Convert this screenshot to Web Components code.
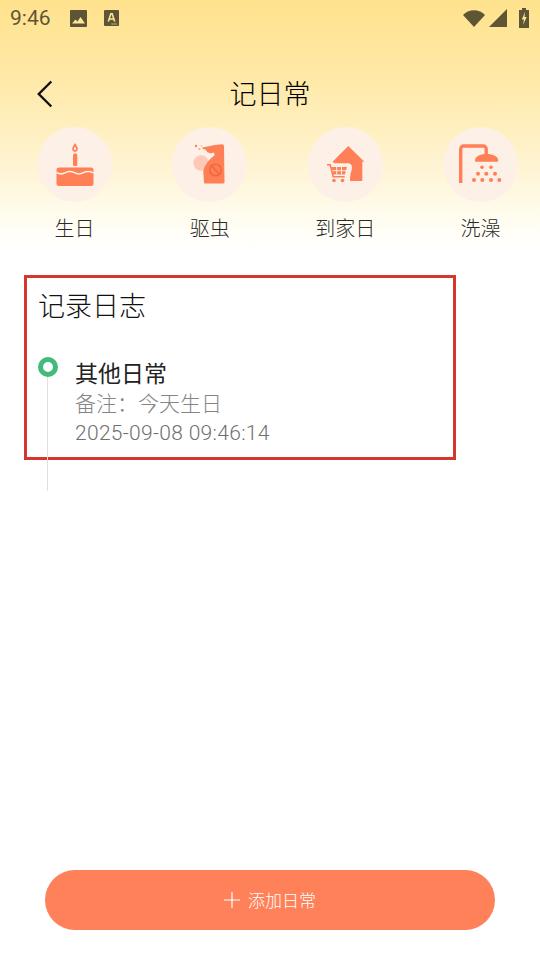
<!DOCTYPE html>
<html lang="zh">
<head>
<meta charset="utf-8">
<title>记日常</title>
<style>
  html, body {
    margin: 0;
    padding: 0;
    background: #fff;
    font-family: Roboto, "Noto Sans CJK SC", sans-serif;
  }
</style>
</head>
<body>
<diary-page>
  <status-bar slot="top" time="9:46"></status-bar>
  <nav-bar slot="top" title="记日常"></nav-bar>
  <quick-row slot="top">
    <quick-item label="生日" icon="cake"></quick-item>
    <quick-item label="驱虫" icon="spray"></quick-item>
    <quick-item label="到家日" icon="home"></quick-item>
    <quick-item label="洗澡" icon="shower"></quick-item>
  </quick-row>
  <log-section heading="记录日志">
    <log-entry title="其他日常" note="备注：今天生日" time="2025-09-08 09:46:14"></log-entry>
  </log-section>
  <add-button slot="bottom" label="添加日常"></add-button>
</diary-page>

<script>
// All icons share a 75x75 box, the same size as the circle behind them
const ICONS = {
  cake: `
    <path d="M38 16c1.200 2.400 2.800 3.700 2.800 5.900 0 1.700-1.200 2.900-2.800 2.900s-2.800-1.200-2.800-2.900c0-2.200 1.600-3.500 2.800-5.900z" fill="#ff7f57"/>
    <path d="M38 19.500c.6 1 1.100 1.600 1.100 2.600 0 .7-.5 1.200-1.100 1.200s-1.100-.5-1.100-1.200c0-1 .5-1.600 1.100-2.600z" fill="#fff0e4"/>
    <rect x="36" y="26.500" width="4.300" height="12.500" rx="1.500" fill="#ff7f57"/>
    <rect x="19.500" y="40.500" width="37" height="18.500" rx="2.500" fill="#ff7f57"/>
    <path d="M19.500 45.500c3 1.800 6 1.800 9 .2s6-1.600 9 0 6 1.600 9 0 6.500-1.400 10 .2" fill="none" stroke="#fff3e8" stroke-width="1.500"/>`,
  spray: `
    <circle cx="29" cy="36" r="7.700" fill="#ffc9b8"/>
    <circle cx="24" cy="19" r="1.200" fill="#ff7f57"/>
    <circle cx="27.500" cy="22" r="1" fill="#ff9f82"/>
    <circle cx="29.500" cy="19" r=".7" fill="#ff9f82"/>
    <path d="M30.500 20.500 43 18l7-.8c1.200 0 2 .8 2 2L52.500 55c0 1-.8 1.500-1.700 1.500H33.500c-1 0-1.500-.5-1.500-1.500l-.7-9.500c-.3-5 4-10.500 8-14.500l3.500-3-1.200-2.500-3 1-3.300-1.500-2-2.500-2.800-.8z" fill="#ff7f57"/>
    <circle cx="43.500" cy="43" r="5.800" fill="none" stroke="#f2673c" stroke-width="1.500"/>
    <path d="m39.500 39 8 8" stroke="#f2673c" stroke-width="1.500"/>`,
  home: `
    <path d="M40.300 19 56.300 34.700h-2V54H42c0-4 .5-8 1.800-11.500.8-2.500-.2-6-3.300-6.200H26.500l-2-1.600z" fill="#ff7f57"/>
    <path d="M19 37.800h3.200l3 12h11.500" fill="none" stroke="#ff7f57" stroke-width="1.600"/>
    <path d="M23.400 40h15.600l-2.200 7.500H25.200z" fill="#ff7f57"/>
    <path d="M24.500 43.700h14" stroke="#fdeee3" stroke-width="1"/>
    <path d="M28.700 40v7.500M33.500 40v7.500" stroke="#fdeee3" stroke-width="1"/>
    <circle cx="26" cy="53.500" r="1.800" fill="#ff7f57"/>
    <circle cx="34.500" cy="53.500" r="1.800" fill="#ff7f57"/>`,
  shower: `
    <path d="M17.700 56V22a3 3 0 0 1 3-3h19.500a3 3 0 0 1 3 3v6" fill="none" stroke="#ff7f57" stroke-width="3.400"/>
    <path d="M32 33.500c0-4 5-6.500 11.500-6.500s11.800 2.500 11.800 6.500c0 .8-.5 1.300-1.300 1.300H33.300c-.8 0-1.300-.5-1.300-1.300z" fill="#ff7f57"/>
    <g fill="#ff7f57">
      <circle cx="39" cy="40.300" r="1.800"/><circle cx="48" cy="40.300" r="1.800"/>
      <circle cx="35" cy="46.700" r="2"/><circle cx="43.300" cy="46.700" r="2"/><circle cx="52" cy="46.700" r="2"/>
      <circle cx="31" cy="53" r="2"/><circle cx="39.300" cy="53" r="2"/><circle cx="48" cy="53" r="2"/><circle cx="56.300" cy="53" r="2"/>
    </g>`
};

/**
 * Page frame: gradient header area, content, and the button at the bottom.
 */
class DiaryPage extends HTMLElement {
  constructor() {
    super();
    this.attachShadow({ mode: 'open' });
    this.shadowRoot.innerHTML = `
      <style>
        :host {
          display: flex;
          flex-direction: column;
          width: 540px;
          height: 960px;
          overflow: hidden;
          box-sizing: border-box;
        }
        .top {
          display: flex;
          flex-direction: column;
          height: 275px;
          flex: none;
          background: linear-gradient(180deg, #ffe28d 0, #ffe9a8 80px, #fff3cf 160px, #fffcee 215px, #ffffff 250px);
        }
        .main {
          flex: 1;
        }
        .bottom {
          flex: none;
          padding: 0 45px 30px;
        }
      </style>
      <div class="top"><slot name="top"></slot></div>
      <div class="main"><slot></slot></div>
      <div class="bottom"><slot name="bottom"></slot></div>
    `;
  }
}

class StatusBar extends HTMLElement {
  constructor() {
    super();
    this.attachShadow({ mode: 'open' });
    this.shadowRoot.innerHTML = `
      <style>
        :host {
          display: flex;
          align-items: center;
          height: 36px;
          padding: 0 11px 0 10px;
          color: #5e5535;
          font: 21px/36px Roboto, sans-serif;
        }
        .time { width: 60px; }
        .icons { display: flex; align-items: center; gap: 17px; }
        .sys { display: flex; align-items: center; margin-left: auto; gap: 4px; }
        svg { display: block; }
      </style>
      <span class="time">${this.getAttribute('time')}</span>
      <div class="icons">
        <svg width="17" height="17" viewBox="0 0 17 17">
          <rect width="17" height="17" rx="1" fill="#5e5535"/>
          <path d="M2 13.500l3.500-4 2 1.900L10.500 7l4.500 6.500z" fill="#ffe79a"/>
        </svg>
        <svg width="15" height="16" viewBox="0 0 15 16">
          <rect width="15" height="16" rx="1" fill="#5e5535"/>
          <path d="M3.500 11.500 6.300 3h2.400l2.800 8.500H9.800l-.5-1.800H5.700l-.5 1.800zM6.200 8.300h2.600L7.500 4.300z" fill="#ffe79a"/>
          <path d="M9.500 13.500h1.200v1H9.500zM11.500 13.500h1.200v1h-1.200zM7.500 13.500h1.200v1H7.500z" fill="#ffe79a"/>
        </svg>
      </div>
      <div class="sys">
        <svg width="22" height="17" viewBox="0 0 22 17"><path d="M0 5C2.800 2 6.700.2 11 .2s8.200 1.800 11 4.800L11 17z" fill="#5e5535"/></svg>
        <svg width="18" height="18" viewBox="0 0 18 18"><path d="M18 0v18H0z" fill="#5e5535"/></svg>
        <svg width="10" height="20" viewBox="0 0 10 20" style="margin-left:8px">
          <path d="M3 0h4v2h3v18H0V2h3z" fill="#5e5535"/>
          <path d="M6 4 2.800 11.500H5L4 17l3.700-8H5.500z" fill="#ffe79a"/>
        </svg>
      </div>
    `;
  }
}

class NavBar extends HTMLElement {
  constructor() {
    super();
    this.attachShadow({ mode: 'open' });
    this.shadowRoot.innerHTML = `
      <style>
        :host {
          display: flex;
          align-items: center;
          justify-content: center;
          position: relative;
          height: 44px;
          margin-top: 35px;
          margin-bottom: 12px;
        }
        h1 {
          margin: 0;
          font: 300 27px/44px "Noto Sans CJK SC", sans-serif;
          color: #000;
        }
        svg { position: absolute; left: 36px; top: 9px; }
      </style>
      <svg width="18" height="28" viewBox="0 0 18 28">
        <path d="M15.300 1.500 2.800 14l12.500 12.500" fill="none" stroke="#111" stroke-width="2.400"/>
      </svg>
      <h1>${this.getAttribute('title')}</h1>
    `;
  }
}

class QuickRow extends HTMLElement {
  constructor() {
    super();
    this.attachShadow({ mode: 'open' });
    this.shadowRoot.innerHTML = `
      <style>
        :host {
          display: flex;
          justify-content: space-between;
          padding: 0 22px 0 37px;
        }
      </style>
      <slot></slot>
    `;
  }
}

class QuickItem extends HTMLElement {
  constructor() {
    super();
    this.attachShadow({ mode: 'open' });
    this.shadowRoot.innerHTML = `
      <style>
        :host {
          display: flex;
          flex-direction: column;
          align-items: center;
          width: 75px;
        }
        .circle {
          width: 75px;
          height: 75px;
          border-radius: 50%;
          background: #fdf0e6;
        }
        svg { display: block; }
        span {
          margin-top: 11px;
          font: 300 20px/30px "Noto Sans CJK SC", sans-serif;
          color: #2a2a2a;
          white-space: nowrap;
        }
      </style>
      <div class="circle">
        <svg width="75" height="75" viewBox="0 0 75 75">${ICONS[this.getAttribute('icon')]}</svg>
      </div>
      <span>${this.getAttribute('label')}</span>
    `;
  }
}

class LogSection extends HTMLElement {
  constructor() {
    super();
    this.attachShadow({ mode: 'open' });
    this.shadowRoot.innerHTML = `
      <style>
        :host {
          display: block;
          box-sizing: border-box;
          width: 432px;
          height: 185px;
          margin-left: 24px;
          padding: 8px 11px 0;
          border: 3px solid #d5362d;
        }
        h2 {
          margin: 0 0 32px;
          font: 300 27px/38px "Noto Sans CJK SC", sans-serif;
          color: #111;
        }
      </style>
      <h2>${this.getAttribute('heading')}</h2>
      <slot></slot>
    `;
  }
}

class LogEntry extends HTMLElement {
  constructor() {
    super();
    this.attachShadow({ mode: 'open' });
    this.shadowRoot.innerHTML = `
      <style>
        :host {
          display: block;
          position: relative;
          padding-left: 37px;
        }
        .dot {
          position: absolute;
          left: 0;
          top: 1px;
          box-sizing: border-box;
          width: 20px;
          height: 20px;
          border: 5px solid #41ba7c;
          border-radius: 50%;
          background: #fff;
        }
        .line {
          position: absolute;
          left: 9px;
          top: 21px;
          width: 1px;
          height: 114px;
          background: #e3dfdc;
        }
        .title {
          font: 400 23px/32px "Noto Sans CJK SC", sans-serif;
          color: #222;
        }
        .note {
          font: 300 21px/28px "Noto Sans CJK SC", sans-serif;
          color: #858585;
        }
        .time {
          font: 300 21px/34px Roboto, sans-serif;
          letter-spacing: .3px;
          color: #707070;
        }
      </style>
      <div class="line"></div>
      <div class="dot"></div>
      <div class="title">${this.getAttribute('title')}</div>
      <div class="note">${this.getAttribute('note')}</div>
      <div class="time">${this.getAttribute('time')}</div>
    `;
  }
}

class AddButton extends HTMLElement {
  constructor() {
    super();
    this.attachShadow({ mode: 'open' });
    this.shadowRoot.innerHTML = `
      <style>
        :host {
          display: flex;
          align-items: center;
          justify-content: center;
          gap: 8px;
          height: 60px;
          border-radius: 30px;
          background: #ff8159;
          color: #fff;
          font: 300 17px/60px "Noto Sans CJK SC", sans-serif;
        }
        svg { display: block; }
      </style>
      <svg width="16" height="16" viewBox="0 0 16 16">
        <path d="M8 0v16M0 8h16" stroke="#fff" stroke-width="1.200" fill="none"/>
      </svg>
      <span>${this.getAttribute('label')}</span>
    `;
  }
}

customElements.define('diary-page', DiaryPage);
customElements.define('status-bar', StatusBar);
customElements.define('nav-bar', NavBar);
customElements.define('quick-row', QuickRow);
customElements.define('quick-item', QuickItem);
customElements.define('log-section', LogSection);
customElements.define('log-entry', LogEntry);
customElements.define('add-button', AddButton);
</script>
</body>
</html>
